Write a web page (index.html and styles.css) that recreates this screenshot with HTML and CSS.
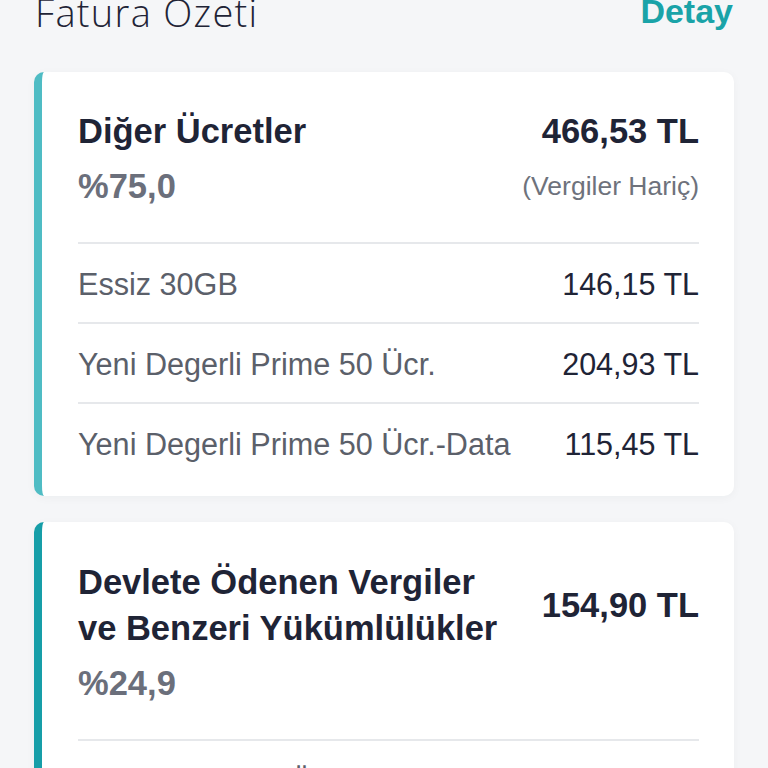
FILE: index.html
```html
<!DOCTYPE html>
<html lang="tr">
<head>
<meta charset="utf-8">
<link rel="stylesheet" href="styles.css">
</head>
<body>
<div class="page">
  <header class="top">
    <h1 class="title">Fatura Özeti</h1>
    <a class="detail">Detay</a>
  </header>

  <section class="card card-light">
    <div class="head">
      <div class="h-title">Diğer Ücretler</div>
      <div class="h-amount">466,53 TL</div>
      <div class="h-pct">%75,0</div>
      <div class="h-note">(Vergiler Hariç)</div>
    </div>
    <div class="row"><span class="r-name">Essiz 30GB</span><span class="r-amt">146,15 TL</span></div>
    <div class="row"><span class="r-name">Yeni Degerli Prime 50 Ücr.</span><span class="r-amt">204,93 TL</span></div>
    <div class="row"><span class="r-name">Yeni Degerli Prime 50 Ücr.-Data</span><span class="r-amt">115,45 TL</span></div>
  </section>

  <section class="card card-dark">
    <div class="head">
      <div class="h-title">Devlete Ödenen Vergiler<br>ve Benzeri Yükümlülükler</div>
      <div class="h-amount">154,90 TL</div>
      <div class="h-pct">%24,9</div>
      <div class="h-note"></div>
    </div>
    <div class="row"><span class="r-name">Telsiz Kullanım Ücreti</span><span class="r-amt">14,24 TL</span></div>
  </section>
</div>
</body>
</html>
```
FILE: styles.css
```css
html, body {
  margin: 0;
  padding: 0;
  background: #f5f6f8;
  overflow: hidden;
  height: 768px;
}
body {
  font-family: "Liberation Sans", Arial, sans-serif;
  color: #1f2436;
}
.page {
  padding: 0 34px 0 34px;
}
.top {
  display: flex;
  justify-content: space-between;
  align-items: baseline;
  margin-top: -12px;
  height: 84px;
}
.title {
  margin: 0;
  font-family: "Open Sans", sans-serif;
  font-size: 38px;
  font-weight: 300;
  letter-spacing: 1.3px;
  line-height: 48px;
  color: #1f2436;
  padding-left: 1px;
}
.detail {
  font-size: 34px;
  font-weight: 700;
  color: #1aa3a8;
  position: relative;
  top: -4px;
  margin-right: 1px;
}
.card {
  background: #fff;
  border-radius: 10px;
  border-left: 8px solid #4fbcc4;
  padding: 36px 35px 14px 36px;
  margin-bottom: 26px;
  box-shadow: 0 2px 10px rgba(30, 40, 60, 0.04);
}
.card-dark {
  border-left-color: #169ea8;
  padding-top: 37px;
}
.head {
  display: grid;
  grid-template-columns: 1fr auto;
  column-gap: 20px;
  row-gap: 9px;
  align-items: center;
  padding-bottom: 33px;
  border-bottom: 2px solid #e6e8eb;
}
.h-title,
.h-amount,
.h-pct {
  font-size: 34.5px;
  font-weight: 700;
  line-height: 46px;
  color: #1f2436;
}
.h-amount {
  text-align: right;
}
.h-pct {
  color: #6b6f7b;
}
.h-note {
  font-size: 26.5px;
  color: #6e727c;
  text-align: right;
}
.row {
  display: flex;
  justify-content: space-between;
  align-items: center;
  height: 76px;
  padding-top: 2px;
  border-bottom: 2px solid #e6e8eb;
}
.row:last-child {
  border-bottom: none;
}
.r-name {
  font-size: 30.6px;
  color: #5b606a;
}
.r-amt {
  font-size: 30.5px;
  color: #1f2436;
}
```
